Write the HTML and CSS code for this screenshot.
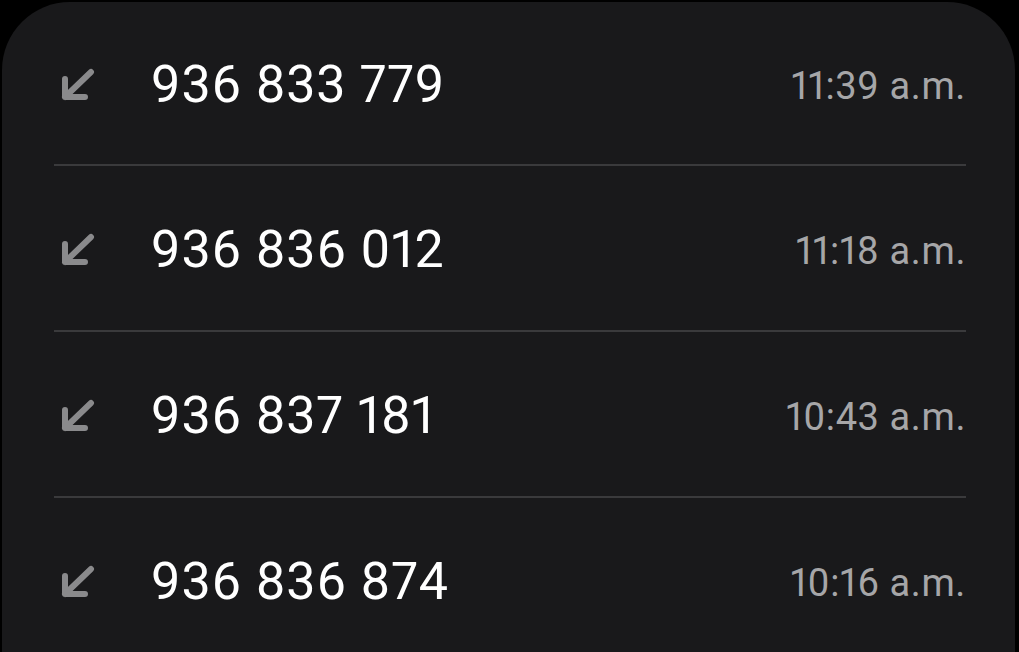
FILE: index.html
```html
<!DOCTYPE html>
<html lang="es">
<head>
    <meta charset="UTF-8">
    <meta name="viewport" content="width=device-width, initial-scale=1.0">
    <title>Llamadas recientes</title>
    <link rel="stylesheet" href="styles.css">
</head>
<body>
    <div id="call-card">
        <div class="call-row">
            <svg class="call-icon" viewBox="0 0 36 34" width="36" height="34"><path d="M5 11 V29 H25 M5 29 L31 4"/></svg>
            <span class="call-number">936 833 779</span>
            <span class="call-time">11:39 a.m.</span>
        </div>
        <div class="call-row">
            <svg class="call-icon" viewBox="0 0 36 34" width="36" height="34"><path d="M5 11 V29 H25 M5 29 L31 4"/></svg>
            <span class="call-number">936 836 012</span>
            <span class="call-time">11:18 a.m.</span>
        </div>
        <div class="call-row">
            <svg class="call-icon" viewBox="0 0 36 34" width="36" height="34"><path d="M5 11 V29 H25 M5 29 L31 4"/></svg>
            <span class="call-number">936 837 181</span>
            <span class="call-time">10:43 a.m.</span>
        </div>
        <div class="call-row">
            <svg class="call-icon" viewBox="0 0 36 34" width="36" height="34"><path d="M5 11 V29 H25 M5 29 L31 4"/></svg>
            <span class="call-number">936 836 874</span>
            <span class="call-time">10:16 a.m.</span>
        </div>
    </div>
</body>
</html>
```
FILE: styles.css
```css
:root {
    --page-bg: #000000;
    --card-bg: #19191b;
    --divider: #3a3a3c;
    --number-color: #ffffff;
    --time-color: #a6a6a8;
    --icon-color: #8a8a8c;
}

html, body {
    margin: 0;
    padding: 0;
    height: 100%;
    overflow: hidden;
}
body {
    background-color: var(--page-bg);
    font-family: Roboto, "Noto Sans", sans-serif;
    font-variant-numeric: proportional-nums;
    padding: 2px 4px 0 2px;
    box-sizing: border-box;
}
#call-card {
    background-color: var(--card-bg);
    border-radius: 68px 68px 0 0;
    height: 700px;
    padding: 0 49px 0 52px;
}
.call-row {
    display: flex;
    align-items: center;
    height: 164px;
    border-top: 2px solid var(--divider);
}
.call-row:first-child {
    height: 162px;
    border-top: none;
}
.call-icon {
    margin-left: 6px;
    margin-top: 4px;
    fill: none;
    stroke: var(--icon-color);
    stroke-width: 6;
    stroke-linecap: round;
    stroke-linejoin: round;
}
.call-number {
    margin-left: 55px;
    margin-top: 3px;
    font-size: 52px;
    letter-spacing: 0.7px;
    color: var(--number-color);
    flex-grow: 1;
}
.call-time {
    font-size: 38px;
    letter-spacing: 0.6px;
    color: var(--time-color);
    padding-top: 5px;
}
```
